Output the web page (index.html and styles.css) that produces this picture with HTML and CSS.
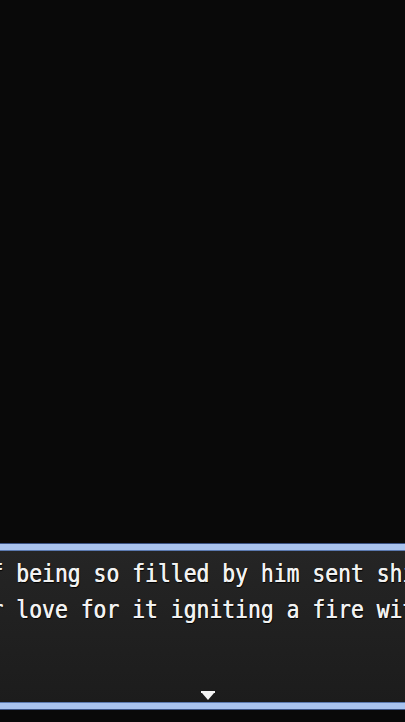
FILE: index.html
```html
<!DOCTYPE html>
<html lang="en">
<head>
  <meta charset="UTF-8" />
  <meta name="viewport" content="width=device-width, initial-scale=1.0" />
  <title>Message</title>
  <link rel="stylesheet" href="styles.css">
</head>
<body>
  <div class="scene"></div>
  <div class="msg-window">
    <div class="msg-text">
      <p>of being so filled by him sent shivers</p>
      <p>er love for it igniting a fire within</p>
    </div>
    <div class="pause">
      <svg width="14" height="10" viewBox="0 0 14 10">
        <rect x="0" y="0" width="14" height="2" fill="#f4f4f4"/>
        <polygon points="1,2 13,2 7,9" fill="#f4f4f4"/>
      </svg>
    </div>
  </div>
</body>
</html>
```

FILE: styles.css
```css
html, body {
  margin: 0;
  padding: 0;
  background: #090909;
  overflow: hidden;
  height: 722px;
}
.scene {
  height: 544px;
}
.msg-window {
  margin: 0 -30px;
  height: 153px;
  display: flex;
  flex-direction: column;
  background: linear-gradient(#252525, #1c1c1c);
  border-top: 6px solid #a9c3ee;
  border-bottom: 6px solid #a9c3ee;
  box-shadow: inset 0 1px 0 #5c7ab0, inset 0 -1px 0 #5c7ab0, 0 -1px 0 #3c5486, 0 1px 0 #3c5486;
}
.msg-text {
  padding: 6px 0 0 8.5px;
  font-family: "DejaVu Sans Mono", monospace;
  font-size: 24.3px;
  line-height: 35.5px;
  color: #f2f2f2;
  white-space: nowrap;
  text-shadow: 0.5px 0 0 #f2f2f2, 1px 1px 1px #000;
  transform: scaleX(0.88);
  transform-origin: left top;
}
.msg-text p {
  margin: 0;
}
.pause {
  margin-top: auto;
  display: flex;
  justify-content: center;
  padding: 0 0 2px 10px;
}
```
